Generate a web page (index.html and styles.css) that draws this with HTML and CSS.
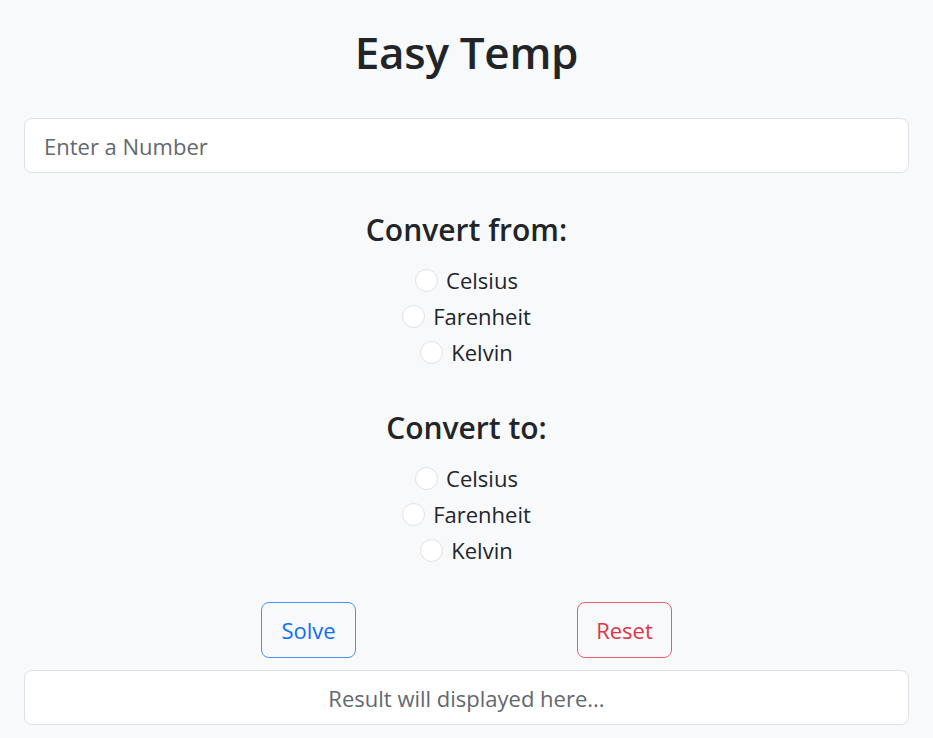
FILE: index.html
```html
<!DOCTYPE html>
<html lang="en">
<head>
<meta charset="utf-8">
<title>Easy Temp</title>
<link rel="stylesheet" href="styles.css">
</head>
<body>
<main class="app">
  <h1 class="title">Easy Temp</h1>
  <input class="field number-input" type="text" placeholder="Enter a Number">

  <section class="group group-from">
    <h3 class="group-title">Convert from:</h3>
    <label class="option"><input class="radio" type="radio" name="from"><span>Celsius</span></label>
    <label class="option"><input class="radio" type="radio" name="from"><span>Farenheit</span></label>
    <label class="option"><input class="radio" type="radio" name="from"><span>Kelvin</span></label>
  </section>

  <section class="group group-to">
    <h3 class="group-title">Convert to:</h3>
    <label class="option"><input class="radio" type="radio" name="to"><span>Celsius</span></label>
    <label class="option"><input class="radio" type="radio" name="to"><span>Farenheit</span></label>
    <label class="option"><input class="radio" type="radio" name="to"><span>Kelvin</span></label>
  </section>

  <div class="actions">
    <button class="btn btn-solve" type="button">Solve</button>
    <button class="btn btn-reset" type="button">Reset</button>
  </div>

  <input class="field result" type="text" placeholder="Result will displayed here..." readonly>
</main>
</body>
</html>
```
FILE: styles.css
```css
html, body {
  margin: 0;
  padding: 0;
  background: #f8f9fa;
}

body {
  font-family: "Open Sans", "Noto Sans", sans-serif;
  color: #212529;
}

.app {
  padding: 0 24px;
  display: flex;
  flex-direction: column;
}

.title {
  margin: 0;
  padding-top: 23px;
  font-size: 44px;
  line-height: 58px;
  font-weight: 600;
  text-align: center;
  letter-spacing: -0.3px;
}

.field {
  box-sizing: border-box;
  display: block;
  width: 100%;
  height: 55px;
  margin: 0;
  padding: 0 19px;
  background: #fff;
  border: 1px solid #dee2e6;
  border-radius: 8px;
  font-family: inherit;
  font-size: 22px;
  color: #212529;
  outline: none;
}

.field::placeholder {
  color: #62686e;
  opacity: 1;
}

.number-input {
  margin-top: 37px;
}

.group {
  display: flex;
  flex-direction: column;
  align-items: center;
}

.group-from {
  margin-top: 37px;
}

.group-to {
  margin-top: 38px;
}

.group-title {
  margin: 0 0 12px;
  font-size: 30px;
  line-height: 40px;
  font-weight: 600;
}

.option {
  display: flex;
  align-items: center;
  gap: 8px;
  height: 36px;
  font-size: 22px;
}

.radio {
  appearance: none;
  -webkit-appearance: none;
  box-sizing: border-box;
  width: 23px;
  height: 23px;
  margin: 0;
  border: 1px solid #dee2e6;
  border-radius: 50%;
  background: #fff;
}

.actions {
  display: flex;
  justify-content: center;
  gap: 221px;
  margin-top: 34px;
}

.btn {
  box-sizing: border-box;
  width: 95px;
  height: 56px;
  padding: 0;
  background: transparent;
  border: 1px solid;
  border-radius: 8px;
  font-family: inherit;
  font-size: 22px;
}

.btn-solve {
  color: #0d6efd;
  border-color: #4d8ffd;
}

.btn-reset {
  color: #dc3545;
  border-color: #e4606d;
}

.result {
  margin-top: 12px;
  text-align: center;
}
```
